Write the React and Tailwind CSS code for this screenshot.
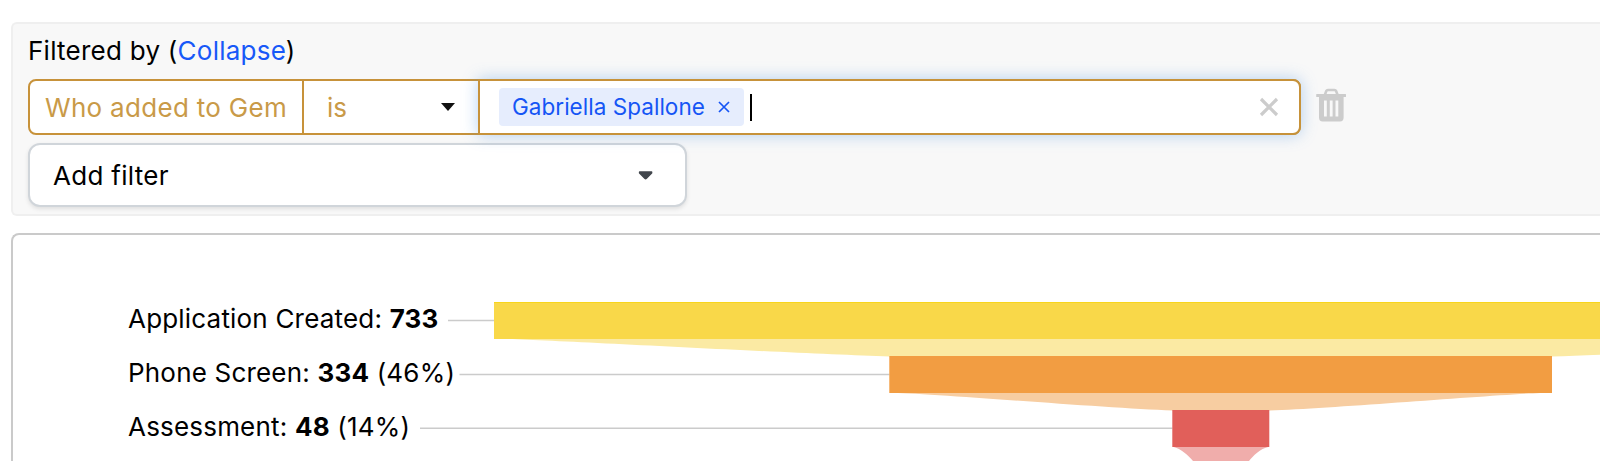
const STAGES = [
  { name: "Application Created", count: 733 },
  { name: "Phone Screen", count: 334, share: "46%" },
  { name: "Assessment", count: 48, share: "14%" },
];

function Caret({ className }) {
  return (
    <svg width="14" height="8" viewBox="0 0 14 8" className={className} aria-hidden="true">
      <path d="M0 0H14L7 8Z" fill="currentColor" />
    </svg>
  );
}

function RoundedCaret({ className }) {
  return (
    <svg width="16" height="9" viewBox="0 0 16 9" className={className} aria-hidden="true">
      <path d="M1.6 1H13.6V2L8.4 7.3Q7.6 8 6.8 7.3L1.6 2Z" fill="currentColor" stroke="currentColor" strokeWidth="1.5" strokeLinejoin="round" />
    </svg>
  );
}

function TrashIcon() {
  return (
    <svg width="30" height="34" viewBox="0 0 30 34" className="text-[#cccccc]" aria-hidden="true">
      <path d="M9 6.5L10.3 3Q10.7 2 12 2H18.4Q19.7 2 20.1 3L21.4 6.5" fill="none" stroke="currentColor" strokeWidth="2.6" />
      <path d="M1 6H29.6Q30 6 30 6.5V8.5Q30 9 29.6 9H27.6V29.5Q27.6 33.4 24 33.4H6.6Q3 33.4 3 29.5V9H0.6Q0.2 9 0.2 8.5V6.5Q0.2 6 0.6 6Z" fill="currentColor" />
      <path d="M9.4 12.5V28.5M15.2 12.5V28.5M20.9 12.5V28.5" fill="none" stroke="#f8f8f8" strokeWidth="2.8" />
    </svg>
  );
}

function FilterRow() {
  return (
    <div className="mt-[7px] flex items-center">
      <div className="relative flex h-14 w-[1273px] rounded-lg border-2 border-[#c7923a] bg-white text-[26px] text-[#c99a48]">
        <div className="flex w-[274px] items-center whitespace-nowrap border-r-2 border-[#c7923a] pl-[15px] tracking-[0.3px]">
          Who added to Gem
        </div>
        <div className="flex w-[174px] items-center justify-between pl-[23px] pr-[23px]">
          <span>is</span>
          <Caret className="text-[#111111]" />
        </div>
        <div className="-my-0.5 -mr-0.5 flex flex-1 items-center rounded-r-lg border-2 border-[#c7923a] bg-white pl-[19px] pr-5 shadow-[0_0_16px_rgba(74,144,226,0.4)]">
          <div className="mt-[-1px] flex h-[38px] w-[245px] items-center rounded bg-[#e6edfd] pl-[13px] text-[22.5px] text-[#1555f5]">
            <span className="whitespace-nowrap tracking-[0.03px]">Gabriella Spallone</span>
            <svg width="12" height="12" viewBox="0 0 12 12" className="ml-[13px]" aria-hidden="true">
              <path d="M1 1L11 11M11 1L1 11" stroke="currentColor" strokeWidth="1.7" />
            </svg>
          </div>
          <span className="ml-[6px] h-[27px] w-0.5 bg-black" />
          <svg width="20" height="20" viewBox="0 0 20 20" className="ml-auto" aria-hidden="true">
            <path d="M2 2L18 18M18 2L2 18" stroke="#cccccc" strokeWidth="3.2" />
          </svg>
        </div>
      </div>
      <div className="-mt-1 ml-[15px]">
        <TrashIcon />
      </div>
    </div>
  );
}

function Filters() {
  return (
    <section className="h-[194px] rounded-l-md border-2 border-r-0 border-[#efefef] bg-[#f8f8f8] pl-[15px] pt-[7px]">
      <div className="h-[41px] whitespace-nowrap text-[26px] leading-10 tracking-[0.25px]">
        Filtered by (<a className="text-[#1858f8]">Collapse</a>)
      </div>
      <FilterRow />
      <div className="mt-2 flex h-16 w-[659px] items-center justify-between rounded-xl border-2 border-[#d0d5da] bg-white pl-[23px] pr-[31px] text-[26px] tracking-[0.3px] shadow-[0_2px_4px_rgba(0,0,0,0.1)]">
        <span>Add filter</span>
        <RoundedCaret className="text-[#41464c]" />
      </div>
    </section>
  );
}

function FunnelChart() {
  return (
    <svg width="1600" height="226" viewBox="0 235 1600 226" className="absolute -left-[13px] top-0" aria-hidden="true">
      <g stroke="#cbcbcb" strokeWidth="1.6">
        <path d="M448 320.5H494.5" />
        <path d="M459.5 374.5H889.5" />
        <path d="M420 428.2H1172.5" />
      </g>
      <path d="M494.5 338.7C530 338.7 780 353 889.5 356.5H1552C1661 353 1911 338.7 1947 338.7Z" fill="#fbeaa3" />
      <path d="M889.5 392.7C925 392.7 1100 408 1172.5 410.5H1269.3C1341 408 1516 392.7 1552 392.7Z" fill="#f7cda1" />
      <path d="M1173 446.7C1181 448.5 1189 456 1193 461H1249C1253 456 1260 448.5 1269 446.7Z" fill="#f0adab" />
      <path d="M494 302H1947V339H494Z" fill="#f9d849" />
      <path d="M494 302.5H1947" stroke="#f8d51c" />
      <path d="M889.3 356H1552V393H889.3Z" fill="#f29d42" />
      <path d="M1172.3 410H1269.3V447H1172.3Z" fill="#e15f5a" />
    </svg>
  );
}

function Funnel() {
  return (
    <section className="relative mt-[17px] h-[228px] overflow-hidden rounded-tl-lg border-l-2 border-t-2 border-[#cacaca] bg-white pl-[115px] pt-[57px]">
      <FunnelChart />
      <div className="relative flex flex-col text-[26px] tracking-[0.19px]">
        {STAGES.map((s) => (
          <div key={s.name} className="h-[54px] whitespace-nowrap leading-[54px]">
            {s.name}: <b className="font-bold">{s.count}</b>
            {s.share && ` (${s.share})`}
          </div>
        ))}
      </div>
    </section>
  );
}

export default function App() {
  return (
    <main className="h-[461px] overflow-hidden bg-white pl-[11px] pt-[22px] font-['Inter',sans-serif] text-black">
      <Filters />
      <Funnel />
    </main>
  );
}
